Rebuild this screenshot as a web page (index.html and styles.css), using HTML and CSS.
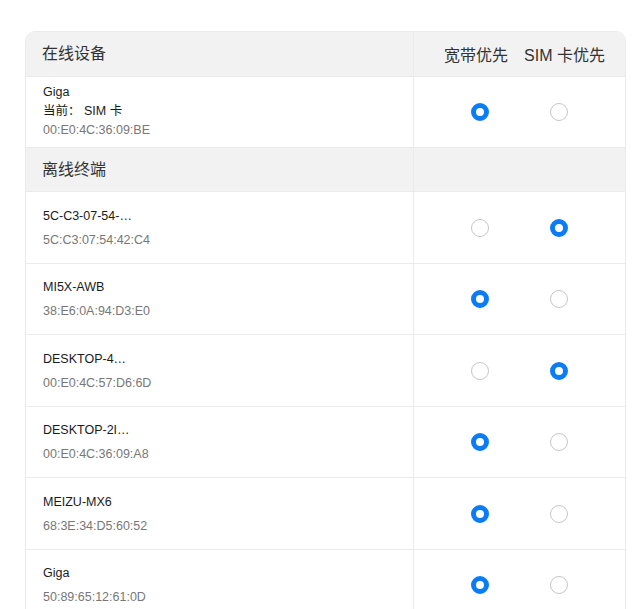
FILE: index.html
```html
<!DOCTYPE html>
<html lang="zh-CN">
<head>
<meta charset="UTF-8">
<meta name="viewport" content="width=device-width, initial-scale=1.0">
<title>终端优先级</title>
<link rel="stylesheet" href="styles.css">
</head>
<body>
<div class="panel">
    <div class="row head">
        <div class="cell-name">在线设备</div>
        <div class="cell-opts head-opts">
            <span>宽带优先</span>
            <span>SIM 卡优先</span>
        </div>
    </div>
    <div class="row online">
        <div class="cell-name">
            <div class="dev-name">Giga</div>
            <div class="dev-name">当前： SIM 卡</div>
            <div class="dev-mac">00:E0:4C:36:09:BE</div>
        </div>
        <div class="cell-opts">
            <span class="radio checked"></span>
            <span class="radio"></span>
        </div>
    </div>
    <div class="row head">
        <div class="cell-name">离线终端</div>
        <div class="cell-opts"></div>
    </div>
    <div class="row">
        <div class="cell-name">
            <div class="dev-name">5C-C3-07-54-…</div>
            <div class="dev-mac">5C:C3:07:54:42:C4</div>
        </div>
        <div class="cell-opts">
            <span class="radio"></span>
            <span class="radio checked"></span>
        </div>
    </div>
    <div class="row">
        <div class="cell-name">
            <div class="dev-name">MI5X-AWB</div>
            <div class="dev-mac">38:E6:0A:94:D3:E0</div>
        </div>
        <div class="cell-opts">
            <span class="radio checked"></span>
            <span class="radio"></span>
        </div>
    </div>
    <div class="row">
        <div class="cell-name">
            <div class="dev-name">DESKTOP-4…</div>
            <div class="dev-mac">00:E0:4C:57:D6:6D</div>
        </div>
        <div class="cell-opts">
            <span class="radio"></span>
            <span class="radio checked"></span>
        </div>
    </div>
    <div class="row">
        <div class="cell-name">
            <div class="dev-name">DESKTOP-2I…</div>
            <div class="dev-mac">00:E0:4C:36:09:A8</div>
        </div>
        <div class="cell-opts">
            <span class="radio checked"></span>
            <span class="radio"></span>
        </div>
    </div>
    <div class="row">
        <div class="cell-name">
            <div class="dev-name">MEIZU-MX6</div>
            <div class="dev-mac">68:3E:34:D5:60:52</div>
        </div>
        <div class="cell-opts">
            <span class="radio checked"></span>
            <span class="radio"></span>
        </div>
    </div>
    <div class="row">
        <div class="cell-name">
            <div class="dev-name">Giga</div>
            <div class="dev-mac">50:89:65:12:61:0D</div>
        </div>
        <div class="cell-opts">
            <span class="radio checked"></span>
            <span class="radio"></span>
        </div>
    </div>
</div>
</body>
</html>
```

FILE: styles.css
```css
html, body {
    margin: 0;
    background-color: #fff;
    overflow: hidden;
}

body {
    padding: 31px 14px 0 25px;
    font-family: "Liberation Sans", Arial, "Noto Sans CJK SC", sans-serif;
    color: #222;
}

.panel {
    width: 599px;
    border: 1px solid #ebebeb;
    border-radius: 10px;
    overflow: hidden;
}

.row {
    display: flex;
    height: 70.5px;
    border-bottom: 1px solid #ebebeb;
}

.row.online {
    height: 70.3px;
}

.row.head {
    height: 43.6px;
    background-color: #f2f2f2;
    font-size: 16px;
    color: #333;
}

.cell-name {
    width: 370px;
    padding-left: 17px;
    border-right: 1px solid #ebebeb;
    display: flex;
    flex-direction: column;
    justify-content: center;
}

.row.head .cell-name {
    padding-left: 16px;
    width: 371px;
    line-height: 20px;
}

.cell-opts {
    flex: 1;
    display: flex;
    align-items: center;
    padding-left: 57px;
    gap: 61px;
}

.head-opts {
    padding-left: 30px;
    gap: 16px;
}

.dev-name {
    font-size: 12.5px;
    line-height: 24px;
    color: #1a1a1a;
}

.dev-mac {
    font-size: 12.5px;
    line-height: 24px;
    color: #777;
}

.online .dev-name,
.online .dev-mac {
    line-height: 19px;
}

.radio {
    width: 16px;
    height: 16px;
    border: 1px solid #c6c6c6;
    border-radius: 50%;
    box-sizing: content-box;
    background-color: #fff;
}

.radio.checked {
    width: 8px;
    height: 8px;
    border: 5px solid #0a7cf7;
}
```
